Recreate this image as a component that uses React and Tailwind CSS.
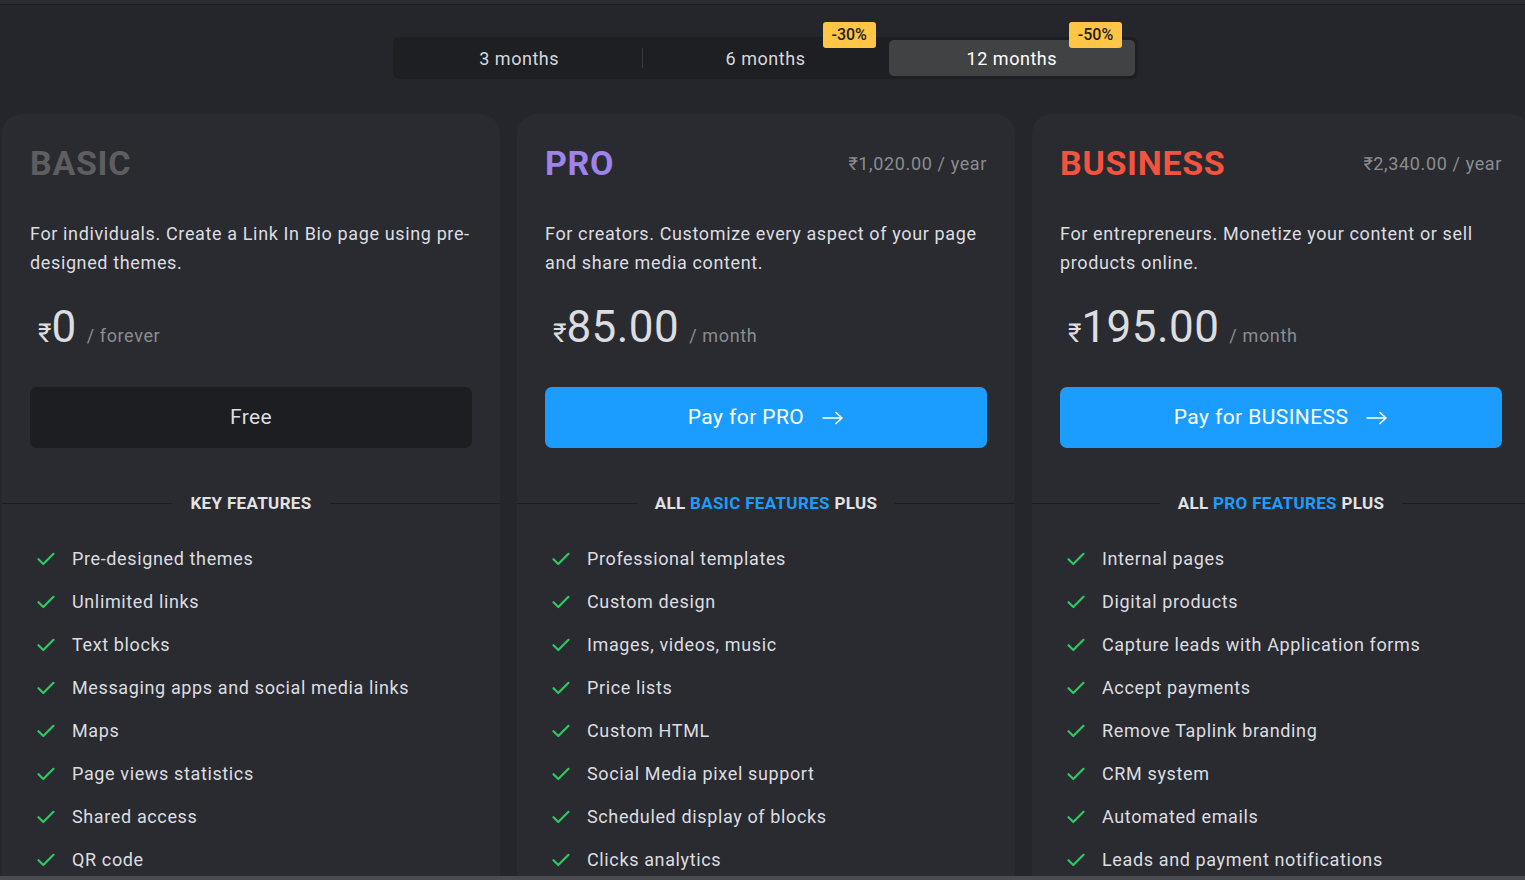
import { useState } from 'react';

const plans = [
  {
    name: 'BASIC',
    nameClass: 'text-[#5e5e60]',
    yearly: null,
    description: 'For individuals. Create a Link In Bio page using pre-designed themes.',
    price: '0',
    period: '/ forever',
    button: 'Free',
    primary: false,
    heading: ['KEY FEATURES'],
    features: [
      'Pre-designed themes',
      'Unlimited links',
      'Text blocks',
      'Messaging apps and social media links',
      'Maps',
      'Page views statistics',
      'Shared access',
      'QR code',
    ],
  },
  {
    name: 'PRO',
    nameClass: 'text-[#9d83ea]',
    yearly: '₹1,020.00 / year',
    description: 'For creators. Customize every aspect of your page and share media content.',
    price: '85.00',
    period: '/ month',
    button: 'Pay for PRO',
    primary: true,
    heading: ['ALL ', 'BASIC FEATURES', ' PLUS'],
    features: [
      'Professional templates',
      'Custom design',
      'Images, videos, music',
      'Price lists',
      'Custom HTML',
      'Social Media pixel support',
      'Scheduled display of blocks',
      'Clicks analytics',
    ],
  },
  {
    name: 'BUSINESS',
    nameClass: 'text-[#f2543f]',
    yearly: '₹2,340.00 / year',
    description: 'For entrepreneurs. Monetize your content or sell products online.',
    price: '195.00',
    period: '/ month',
    button: 'Pay for BUSINESS',
    primary: true,
    heading: ['ALL ', 'PRO FEATURES', ' PLUS'],
    features: [
      'Internal pages',
      'Digital products',
      'Capture leads with Application forms',
      'Accept payments',
      'Remove Taplink branding',
      'CRM system',
      'Automated emails',
      'Leads and payment notifications',
    ],
  },
];

const periods = [
  { label: '3 months', badge: null },
  { label: '6 months', badge: '-30%' },
  { label: '12 months', badge: '-50%' },
];

function Check() {
  return (
    <svg width="18" height="14" viewBox="0 0 18 14" fill="none" className="shrink-0">
      <path d="M1.5 7.2 6.3 12 16.5 1.8" stroke="#2fc862" strokeWidth="2.2" strokeLinecap="round" strokeLinejoin="round" />
    </svg>
  );
}

function Arrow() {
  return (
    <svg width="22" height="14" viewBox="0 0 22 14" fill="none">
      <path d="M1 7h19M14 1.5 20 7l-6 5.5" stroke="currentColor" strokeWidth="1.6" strokeLinecap="round" strokeLinejoin="round" />
    </svg>
  );
}

function PlanCard({ plan }) {
  return (
    <div className="flex w-[498px] shrink-0 flex-col rounded-[20px] bg-[#2a2b30] pb-10">
      <div className="px-[28px] pt-[29px]">
        <div className="flex items-center justify-between">
          <h2 className={`text-[34px] font-bold leading-[40px] tracking-[0.02em] ${plan.nameClass}`}>{plan.name}</h2>
          {plan.yearly ? <span className="text-[18px] tracking-[0.035em] text-[#8b8c91]">{plan.yearly}</span> : null}
        </div>
        <p className="mt-[36px] text-[18px] leading-[29px] tracking-[0.035em] text-[#dcdde0]">{plan.description}</p>
        <div className="mt-[24px] flex items-baseline pl-[8px]">
          <span className="text-[26px] text-[#dcdde0]">₹</span>
          <span className="text-[44px] leading-[52px] tracking-[0.01em] text-[#dcdde0]">{plan.price}</span>
          <span className="ml-[10px] text-[18px] tracking-[0.035em] text-[#8b8c91]">{plan.period}</span>
        </div>
        <button
          type="button"
          className={[
            'mt-[34px] flex h-[61px] w-full items-center justify-center gap-[18px] rounded-[7px] text-[21px] tracking-[0.02em]',
            plan.primary ? 'bg-[#1a9dff] text-white' : 'bg-[#1d1e22] text-[#dcdde0]',
          ].join(' ')}
        >
          {plan.button}
          {plan.primary ? <Arrow /> : null}
        </button>
      </div>

      <div className="mt-[45px] flex items-center">
        <div className="h-px flex-1 bg-[#1b1c1f]" />
        <h3 className="px-[18px] text-[17px] font-bold leading-[20px] tracking-[0.02em] text-[#e2e2e4]">
          {plan.heading.map((part, i) => (
            <span key={i} className={i === 1 ? 'text-[#1a9dff]' : ''}>
              {part}
            </span>
          ))}
        </h3>
        <div className="h-px flex-1 bg-[#1b1c1f]" />
      </div>

      <ul className="mt-[24px] px-[35px]">
        {plan.features.map((f) => (
          <li key={f} className="flex h-[43px] items-center gap-[17px] text-[18px] tracking-[0.035em] text-[#dcdde0]">
            <Check />
            <span>{f}</span>
          </li>
        ))}
      </ul>
    </div>
  );
}

export default function App() {
  const [period, setPeriod] = useState(2);

  return (
    <div className="flex h-[880px] flex-col overflow-hidden bg-[#25262b] font-['Roboto','Liberation_Sans',sans-serif]">
      <div className="h-[5px] shrink-0 border-b border-[#1b1c1f] bg-[#2b2c31]" />

      <div className="relative flex-1 overflow-hidden">
        <div className="ml-[393px] mt-[32px] flex h-[42px] w-[745px] items-center rounded-[6px] bg-[#1e1f23] p-[3px]">
          {periods.map((p, i) => (
            <button
              key={p.label}
              type="button"
              onClick={() => setPeriod(i)}
              className={[
                'relative flex h-[36px] flex-1 items-center justify-center rounded-[5px] text-[18px] tracking-[0.03em]',
                period === i ? 'bg-[#414244] text-white' : 'text-[#d7d8db]',
              ].join(' ')}
            >
              {i === 1 && period !== 0 && period !== 1 ? (
                <span className="absolute left-0 top-[8px] h-[20px] w-px bg-[#3a3b3f]" />
              ) : null}
              {p.label}
              {p.badge ? (
                <span className="absolute right-[13px] top-[-18px] flex h-[26px] w-[53px] items-center justify-center rounded-[3px] bg-[#ffc547] text-[16px] font-medium tracking-normal text-[#1d1d1d]">
                  {p.badge}
                </span>
              ) : null}
            </button>
          ))}
        </div>

        <div className="mt-[35px] flex gap-[17px] pl-[2px]">
          {plans.map((plan) => (
            <PlanCard key={plan.name} plan={plan} />
          ))}
        </div>
      </div>

      <div className="h-[4px] shrink-0 bg-[#4a4b50]" />
    </div>
  );
}
